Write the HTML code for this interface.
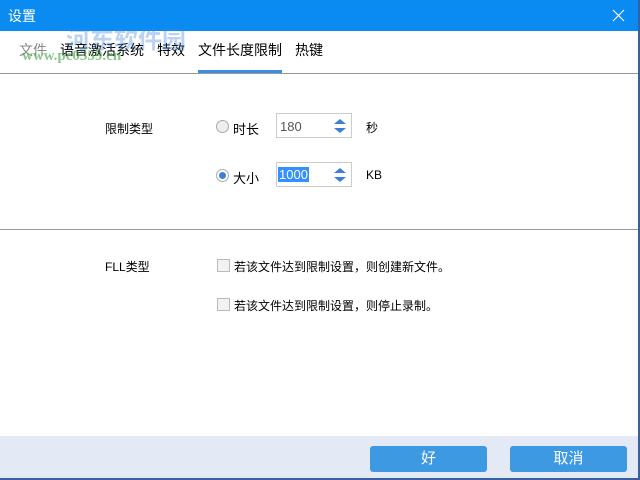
<!DOCTYPE html>
<html><head><meta charset="utf-8"><style>
*{margin:0;padding:0;box-sizing:border-box}
body{width:640px;height:480px;overflow:hidden;background:#fff;font-family:"Liberation Sans","Noto Sans CJK SC",sans-serif;font-size:12px;color:#000;position:relative}
.a{position:absolute}
.title{left:0;top:0;width:640px;height:31px;background:#0a8bf2;color:#fff;font-size:14px}
.tab{top:40px;font-size:14px}
.rad{width:13px;height:13px;border:1px solid #aaa;border-radius:50%;background:#eee}
.box{width:76px;height:25px;border:1px solid #ccc;background:#fff}
.chk{width:13px;height:13px;border:1px solid #bbb;background:#f2f2f2}
.btn{top:446px;width:117px;height:26px;background:#3c99e2;border-radius:3px;color:#fff;text-align:center;line-height:26px;font-size:15px}
</style></head><body>
<div class="a title"><span class="a" style="left:8px;top:6px">设置</span>
<svg class="a" style="left:612px;top:9px" width="13" height="13"><path d="M1 1L12 12M12 1L1 12" stroke="#fff" stroke-width="1.2"/></svg></div>
<div class="a" style="right:0;top:0;width:2px;height:480px;background:#3a5fa0"></div>
<div class="a" style="left:0;bottom:0;width:640px;height:2px;background:#3a5fa0"></div>
<span class="a tab" style="left:19px;color:#888">文件</span>
<span class="a tab" style="left:60px">语音激活系统</span>
<span class="a tab" style="left:157px">特效</span>
<span class="a tab" style="left:198px">文件长度限制</span>
<span class="a tab" style="left:295px">热键</span>
<div class="a" style="left:198px;top:70px;width:84px;height:3px;background:#3c8fe0"></div>
<div class="a" style="left:0;top:73px;width:638px;height:1px;background:#999"></div>
<span class="a" style="left:66px;top:20px;font-size:24px;font-weight:bold;color:rgba(60,130,220,.35)">河东软件园</span>
<span class="a" style="left:22px;top:48px;font-size:15px;font-weight:bold;color:rgba(60,160,60,.6);font-family:'Liberation Serif',serif">www.pc0359.cn</span>
<span class="a" style="left:105px;top:120px">限制类型</span>
<div class="a rad" style="left:216px;top:120px"></div>
<span class="a" style="left:233px;top:119px;font-size:13px">时长</span>
<div class="a box" style="left:276px;top:113px"></div>
<span class="a" style="left:280px;top:119px;color:#555;font-size:13px">180</span>
<svg class="a" style="left:333px;top:118px" width="14" height="16"><path d="M1 6L7 1L13 6Z M1 10L7 15L13 10Z" fill="#3c7fd8"/></svg>
<span class="a" style="left:366px;top:119px">秒</span>
<div class="a rad" style="left:216px;top:169px;background:#fff"><div class="a" style="left:2px;top:2px;width:7px;height:7px;border-radius:50%;background:#3c7fd8"></div></div>
<span class="a" style="left:233px;top:168px;font-size:13px">大小</span>
<div class="a box" style="left:276px;top:162px"></div>
<span class="a" style="left:278px;top:167px;background:#3390ff;color:#fff;padding:0 1px;font-size:13px">1000</span>
<svg class="a" style="left:333px;top:167px" width="14" height="16"><path d="M1 6L7 1L13 6Z M1 10L7 15L13 10Z" fill="#3c7fd8"/></svg>
<span class="a" style="left:366px;top:168px">KB</span>
<div class="a" style="left:0;top:229px;width:638px;height:1px;background:#999"></div>
<span class="a" style="left:105px;top:258px">FLL类型</span>
<div class="a chk" style="left:217px;top:259px"></div>
<span class="a" style="left:234px;top:258px">若该文件达到限制设置，则创建新文件。</span>
<div class="a chk" style="left:217px;top:298px"></div>
<span class="a" style="left:234px;top:297px">若该文件达到限制设置，则停止录制。</span>
<div class="a" style="left:0;top:436px;width:638px;height:42px;background:#e4eaf5"></div>
<div class="a btn" style="left:370px">好</div>
<div class="a btn" style="left:510px">取消</div>
</body></html>
